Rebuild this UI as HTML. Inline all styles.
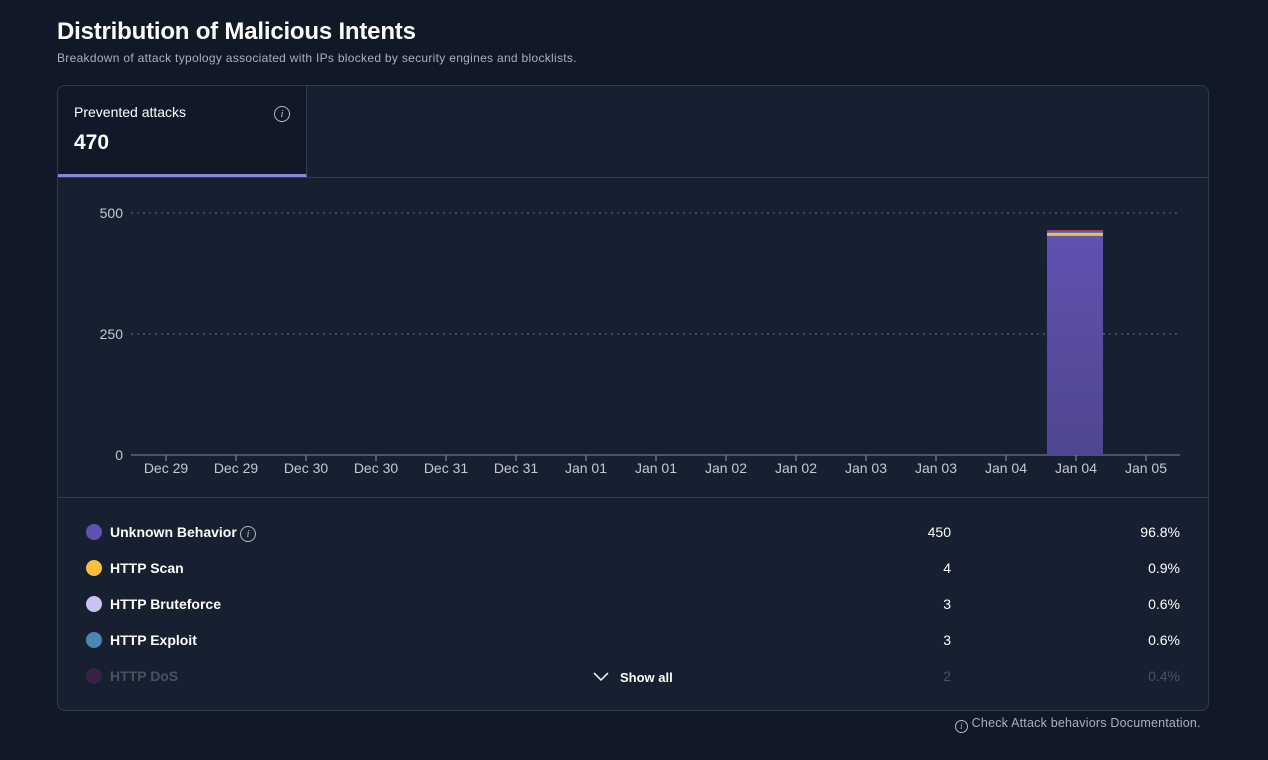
<!DOCTYPE html>
<html><head><meta charset="utf-8"><style>
*{margin:0;padding:0;box-sizing:border-box}
body{width:1268px;height:760px;background:#111827;font-family:"Liberation Sans",sans-serif;color:#e5e7eb;position:relative;overflow:hidden}
.a{position:absolute}
h1{position:absolute;left:57px;top:18px;font-size:24px;font-weight:bold;color:#fff;letter-spacing:-0.2px}
.sub{left:57px;top:51px;font-size:12px;color:#a9b0bd;letter-spacing:0.3px}
.card{left:57px;top:85px;width:1152px;height:626px;background:#172030;border:1px solid #323b4b;border-radius:8px;overflow:hidden}
.tab{left:0;top:0;width:249px;height:91px;background:#111827;border-right:1px solid #323b4b;border-bottom:3px solid #8b85d6}
.hl{left:0;top:91px;width:1152px;height:1px;background:#323b4b}
.yl{font-size:14px;color:#c4c9d2;text-align:right;width:40px}
.xl{font-size:14px;color:#c4c9d2;width:70px;text-align:center;top:374px}
.row{font-size:14px;font-weight:bold;color:#fff}
.dot{width:16px;height:16px;border-radius:50%}
.num{font-size:14px;color:#fff;text-align:right}
.info{display:inline-block;width:16px;height:16px;border:1px solid #b5bac4;border-radius:50%;font-size:11px;text-align:center;line-height:14px;font-style:italic;color:#b5bac4;font-family:"Liberation Serif",serif}
</style></head><body>
<h1>Distribution of Malicious Intents</h1>
<div class="a sub">Breakdown of attack typology associated with IPs blocked by security engines and blocklists.</div>
<div class="a card">
 <div class="a tab">
  <div class="a" style="left:16px;top:18px;font-size:14px;color:#fff">Prevented attacks</div>
  <div class="a" style="left:216px;top:18px"><span class="info">i</span></div>
  <div class="a" style="left:16px;top:45px;font-size:21px;font-weight:bold;color:#fff">470</div>
 </div>
 <div class="a hl"></div>
 <div class="a yl" style="left:25px;top:119px">500</div>
 <div class="a yl" style="left:25px;top:240px">250</div>
 <div class="a yl" style="left:25px;top:361px">0</div>
 <svg class="a" style="left:0;top:0" width="1152" height="420">
  <line x1="73" y1="127" x2="1122" y2="127" stroke="#4a5566" stroke-width="1.5" stroke-dasharray="2,4"/>
  <line x1="73" y1="248" x2="1122" y2="248" stroke="#4a5566" stroke-width="1.5" stroke-dasharray="2,4"/>
  <line x1="73" y1="369" x2="1122" y2="369" stroke="#4a5566" stroke-width="2"/>
  <g stroke="#6b7383" stroke-width="1.5">
   <line x1="108" y1="369" x2="108" y2="375"/><line x1="178" y1="369" x2="178" y2="375"/><line x1="248" y1="369" x2="248" y2="375"/><line x1="318" y1="369" x2="318" y2="375"/><line x1="388" y1="369" x2="388" y2="375"/><line x1="458" y1="369" x2="458" y2="375"/><line x1="528" y1="369" x2="528" y2="375"/><line x1="598" y1="369" x2="598" y2="375"/><line x1="668" y1="369" x2="668" y2="375"/><line x1="738" y1="369" x2="738" y2="375"/><line x1="808" y1="369" x2="808" y2="375"/><line x1="878" y1="369" x2="878" y2="375"/><line x1="948" y1="369" x2="948" y2="375"/><line x1="1018" y1="369" x2="1018" y2="375"/><line x1="1088" y1="369" x2="1088" y2="375"/>
  </g>
  <defs><linearGradient id="g" x1="0" y1="0" x2="0" y2="1"><stop offset="0" stop-color="#5f52b0"/><stop offset="1" stop-color="#4f4690"/></linearGradient></defs>
  <rect x="989" y="150" width="56" height="219" fill="url(#g)"/>
  <rect x="989" y="144" width="56" height="1" fill="#a33a4e"/>
  <rect x="989" y="145" width="56" height="1" fill="#b0405a"/>
  <rect x="989" y="146" width="56" height="1" fill="#4b7ca8"/>
  <rect x="989" y="147" width="56" height="1" fill="#c9c4ef"/>
  <rect x="989" y="148" width="56" height="2" fill="#e8b34a"/>
 </svg>
 <div class="a xl" style="left:73px">Dec 29</div><div class="a xl" style="left:143px">Dec 29</div><div class="a xl" style="left:213px">Dec 30</div><div class="a xl" style="left:283px">Dec 30</div><div class="a xl" style="left:353px">Dec 31</div><div class="a xl" style="left:423px">Dec 31</div><div class="a xl" style="left:493px">Jan 01</div><div class="a xl" style="left:563px">Jan 01</div><div class="a xl" style="left:633px">Jan 02</div><div class="a xl" style="left:703px">Jan 02</div><div class="a xl" style="left:773px">Jan 03</div><div class="a xl" style="left:843px">Jan 03</div><div class="a xl" style="left:913px">Jan 04</div><div class="a xl" style="left:983px">Jan 04</div><div class="a xl" style="left:1053px">Jan 05</div>
 <div class="a hl" style="top:411px"></div>
 <div class="a dot" style="left:28px;top:438px;background:#5f52b0"></div>
 <div class="a row" style="left:52px;top:438px">Unknown Behavior</div>
 <div class="a" style="left:182px;top:438px"><span class="info">i</span></div>
 <div class="a num" style="left:833px;top:438px;width:60px">450</div><div class="a num" style="left:1062px;top:438px;width:60px">96.8%</div>
 <div class="a dot" style="left:28px;top:474px;background:#fbbf3c"></div>
 <div class="a row" style="left:52px;top:474px">HTTP Scan</div>
 <div class="a num" style="left:833px;top:474px;width:60px">4</div><div class="a num" style="left:1062px;top:474px;width:60px">0.9%</div>
 <div class="a dot" style="left:28px;top:510px;background:#c9c4ef"></div>
 <div class="a row" style="left:52px;top:510px">HTTP Bruteforce</div>
 <div class="a num" style="left:833px;top:510px;width:60px">3</div><div class="a num" style="left:1062px;top:510px;width:60px">0.6%</div>
 <div class="a dot" style="left:28px;top:546px;background:#4b86b4"></div>
 <div class="a row" style="left:52px;top:546px">HTTP Exploit</div>
 <div class="a num" style="left:833px;top:546px;width:60px">3</div><div class="a num" style="left:1062px;top:546px;width:60px">0.6%</div>
 <div class="a dot" style="left:28px;top:582px;background:#3c1f44"></div>
 <div class="a row" style="left:52px;top:582px;color:#4a5262">HTTP DoS</div>
 <div class="a num" style="left:833px;top:582px;width:60px;color:#4a5262">2</div><div class="a num" style="left:1062px;top:582px;width:60px;color:#4a5262">0.4%</div>
 <svg class="a" style="left:535px;top:586px" width="16" height="10"><path d="M1 1 L8 8 L15 1" stroke="#fff" stroke-width="1.5" fill="none"/></svg>
 <div class="a row" style="left:562px;top:584px;font-size:13px">Show all</div>
</div>
<div class="a" style="left:955px;top:716px;font-size:12.5px;color:#a9b0bd;letter-spacing:0.2px"><span class="info" style="width:13px;height:13px;line-height:11px;font-size:9px;vertical-align:-2px">i</span> Check Attack behaviors Documentation.</div>
</body></html>
